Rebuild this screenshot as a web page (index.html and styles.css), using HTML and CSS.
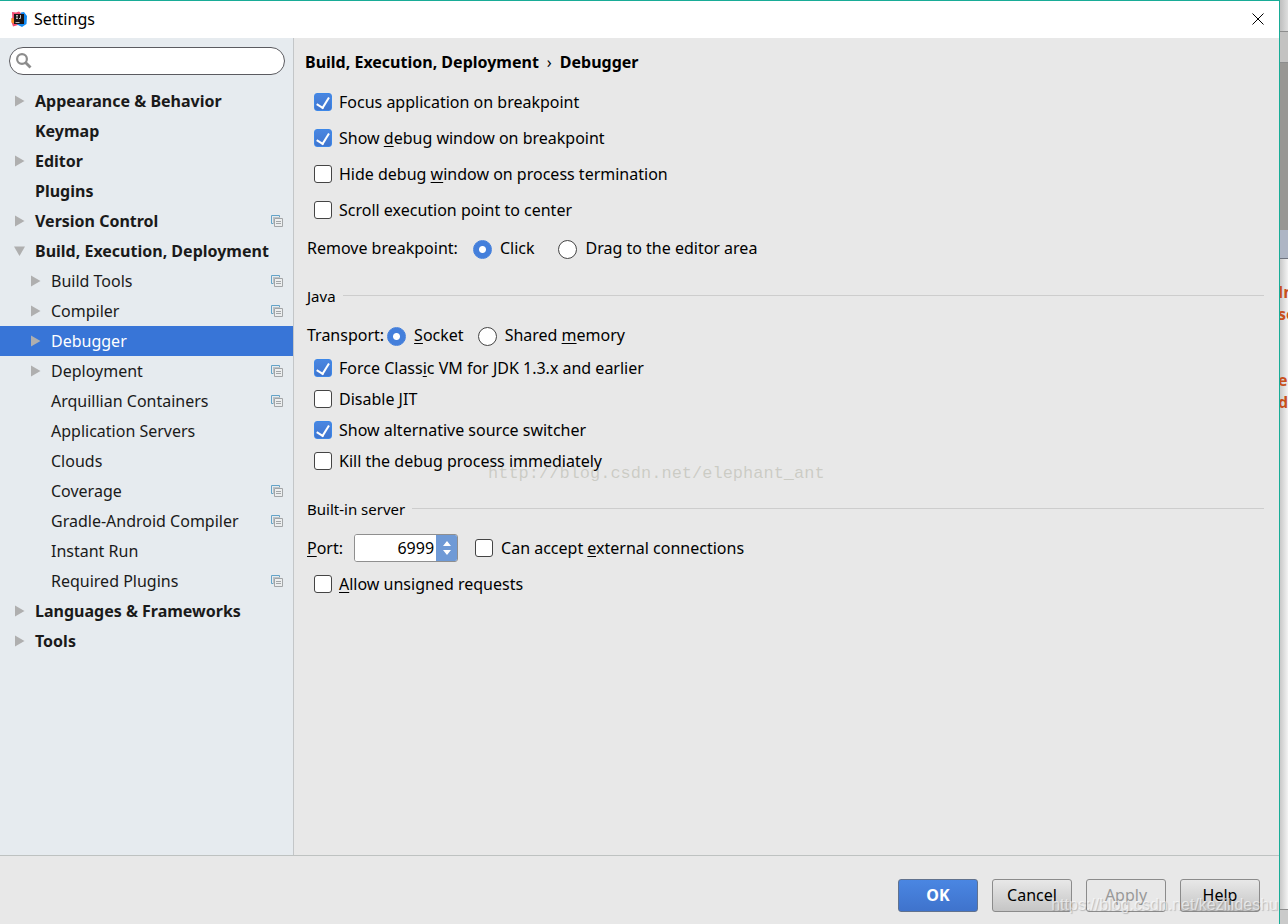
FILE: index.html
```html
<!DOCTYPE html>
<html lang="en">
<head>
<meta charset="utf-8">
<title>Settings</title>
<link rel="stylesheet" href="styles.css">
</head>
<body>
<svg class="defs" aria-hidden="true">
  <symbol id="arrow" viewBox="0 0 12 12"><path d="M1 .5v11l9.500-5.500z" fill="#afafaf"/></symbol>
  <symbol id="arrow-down" viewBox="0 0 12 12"><path d="M0 1.500h11L5.500 11z" fill="#afafaf"/></symbol>
  <symbol id="copy" viewBox="0 0 12 12"><path d="M8.500 2.500v-2h-8v8h2" fill="none" stroke="#64a3c7"/><path d="M2 2h7v1H3v6H2z" fill="#b9c3c9"/><path d="M3.500 3.500h8v8h-8z" fill="#eceeef" stroke="#a2a5a7"/><path d="M5 6.500h5M5 8.500h5" stroke="#a2a5a7"/></symbol>
</svg>
<div class="screen">
  <main class="window">
    <header class="titlebar">
      <svg class="logo" viewBox="0 0 16 16"><path d="M1 1l4 .5 3-1 3 2.500-4 11-5 1.500L.500 11l.8-5z" fill="#f34c72"/><path d="M.3 7l4 1v5L.5 11.500z" fill="#fc8c25"/><path d="M10 1.500L13 1l3 4-.5 8-4.500 3-5-2.500z" fill="#148bf3"/><path d="M3 3h10v10H3z" fill="#1a1517"/><path d="M5 4.500h2M6 4.500v3M5 7.500h2M9.500 4v3.500H8M4.500 11.500h4" stroke="#bbb" fill="none"/></svg>
      <h1 class="title">Settings</h1>
      <button class="close" aria-label="Close"><svg viewBox="0 0 12 12"><path d="M.5.5l11 11M11.500.5l-11 11" stroke="#000"/></svg></button>
    </header>
    <div class="body">
      <aside class="sidebar">
        <label class="search"><svg viewBox="0 0 16 16"><circle cx="6" cy="6" r="4.900" fill="none" stroke="#8c8c8c" stroke-width="2.200"/><path d="M9.500 9.500L14.500 14.500" stroke="#8c8c8c" stroke-width="2.800"/></svg><input type="text" aria-label="Search settings"></label>
        <ul class="tree">
          <li class="top"><svg class="ar"><use href="#arrow"/></svg><span>Appearance &amp; Behavior</span></li>
          <li class="top"><i class="ar"></i><span>Keymap</span></li>
          <li class="top"><svg class="ar"><use href="#arrow"/></svg><span>Editor</span></li>
          <li class="top"><i class="ar"></i><span>Plugins</span></li>
          <li class="top"><svg class="ar"><use href="#arrow"/></svg><span>Version Control</span><svg class="copy"><use href="#copy"/></svg></li>
          <li class="top"><svg class="ar"><use href="#arrow-down"/></svg><span>Build, Execution, Deployment</span></li>
          <li class="sub"><svg class="ar"><use href="#arrow"/></svg><span>Build Tools</span><svg class="copy"><use href="#copy"/></svg></li>
          <li class="sub"><svg class="ar"><use href="#arrow"/></svg><span>Compiler</span><svg class="copy"><use href="#copy"/></svg></li>
          <li class="sub selected"><svg class="ar"><use href="#arrow"/></svg><span>Debugger</span></li>
          <li class="sub"><svg class="ar"><use href="#arrow"/></svg><span>Deployment</span><svg class="copy"><use href="#copy"/></svg></li>
          <li class="sub"><i class="ar"></i><span>Arquillian Containers</span><svg class="copy"><use href="#copy"/></svg></li>
          <li class="sub"><i class="ar"></i><span>Application Servers</span></li>
          <li class="sub"><i class="ar"></i><span>Clouds</span></li>
          <li class="sub"><i class="ar"></i><span>Coverage</span><svg class="copy"><use href="#copy"/></svg></li>
          <li class="sub"><i class="ar"></i><span>Gradle-Android Compiler</span><svg class="copy"><use href="#copy"/></svg></li>
          <li class="sub"><i class="ar"></i><span>Instant Run</span></li>
          <li class="sub"><i class="ar"></i><span>Required Plugins</span><svg class="copy"><use href="#copy"/></svg></li>
          <li class="top"><svg class="ar"><use href="#arrow"/></svg><span>Languages &amp; Frameworks</span></li>
          <li class="top"><svg class="ar"><use href="#arrow"/></svg><span>Tools</span></li>
        </ul>
      </aside>
      <section class="content">
        <h2 class="crumbs"><span>Build, Execution, Deployment</span><span class="sep">›</span><span>Debugger</span></h2>
        <div class="checks loose">
          <label><input type="checkbox" checked><span>Focus application on breakpoint</span></label>
          <label><input type="checkbox" checked><span>Show <u>d</u>ebug window on breakpoint</span></label>
          <label><input type="checkbox"><span>Hide debug <u>w</u>indow on process termination</span></label>
          <label><input type="checkbox"><span>Scroll execution point to center</span></label>
        </div>
        <div class="row remove">
          <span class="lead">Remove breakpoint:</span>
          <label><input type="radio" name="remove" checked><span>Click</span></label>
          <label><input type="radio" name="remove"><span>Drag to the editor area</span></label>
        </div>
        <h3 class="group">Java</h3>
        <div class="row transport">
          <span class="lead">Transport:</span>
          <label><input type="radio" name="transport" checked><span><u>S</u>ocket</span></label>
          <label><input type="radio" name="transport"><span>Shared <u>m</u>emory</span></label>
        </div>
        <div class="checks tight">
          <label><input type="checkbox" checked><span>Force Class<u>i</u>c VM for JDK 1.3.x and earlier</span></label>
          <label><input type="checkbox"><span>Disable JIT</span></label>
          <label><input type="checkbox" checked><span>Show alternative source switcher</span></label>
          <label><input type="checkbox"><span>Kill the debug process immediately</span></label>
          <span class="mark">http://blog.csdn.net/elephant_ant</span>
        </div>
        <h3 class="group">Built-in server</h3>
        <div class="row port">
          <label for="port"><span><u>P</u>ort:</span></label>
          <div class="spinner"><input id="port" type="text" value="6999"><button aria-label="Change port"><svg viewBox="0 0 8 14"><path d="M0 5h8L4 0zM0 9h8l-4 5z" fill="#fff"/></svg></button></div>
          <label><input type="checkbox"><span>Can accept <u>e</u>xternal connections</span></label>
        </div>
        <div class="checks last"><label><input type="checkbox"><span><u>A</u>llow unsigned requests</span></label></div>
      </section>
    </div>
    <footer class="footer">
      <button class="btn primary">OK</button>
      <button class="btn">Cancel</button>
      <button class="btn" disabled>Apply</button>
      <button class="btn">Help</button>
      <span class="credit">https://blog.csdn.net/kezilideshu</span>
    </footer>
  </main>
  <aside class="behind">
    <div class="b1"></div><div class="b2"></div><div class="b3"></div><div class="b4"></div>
    <div class="code"><p>In</p><p>se</p><p class="gap">ea</p><p>d</p></div>
    <div class="b5"></div>
  </aside>
</div>
</body>
</html>
```
FILE: styles.css
```css
* { box-sizing: border-box; }
body { margin: 0; font: 16px/22px "Noto Sans", "Open Sans", sans-serif; color: #000; }
h1, h2, h3, ul, p { margin: 0; padding: 0; }
button, input { font: inherit; color: inherit; }
.defs { position: absolute; width: 0; height: 0; }
.screen { display: flex; min-height: 100vh; overflow: hidden; background: #f3f3f3; }
.window { flex: 1; min-width: 0; display: flex; flex-direction: column; border-top: 1px solid #18ac97; border-right: 1px solid #18ac97; background: #e8e8e8; }
.titlebar { display: flex; align-items: center; height: 37px; padding: 0 15px 1px 11px; background: #fff; }
.logo { width: 16px; height: 16px; margin-right: 7px; }
.title { flex: 1; font-size: 16px; font-weight: 400; line-height: 22px; }
.close { display: flex; padding: 0; border: 0; background: none; }
.close svg { width: 12px; height: 12px; }
.body { flex: 1; display: flex; }
.sidebar { width: 294px; background: #e6ebef; border-right: 1px solid #c3c6c8; }
.search { display: flex; align-items: center; height: 28px; margin: 9px 8px 11px 9px; padding: 0 6px; border: 1px solid #5b5b60; border-radius: 14px; background: #fff; }
.search svg { width: 16px; height: 16px; }
.search input { flex: 1; min-width: 0; border: 0; outline: 0; background: none; }
.tree { list-style: none; color: #1a1a1a; }
.tree li { display: flex; align-items: center; height: 30px; padding: 0 10px 1px 14px; white-space: nowrap; }
.tree .sub { padding-left: 30px; }
.top { font-weight: 700; }
.tree span { flex: 1; }
.ar { width: 12px; height: 12px; margin-right: 9px; }
.copy { width: 12px; height: 12px; }
.tree .selected { background: #3875d7; color: #fff; }
.content { flex: 1; min-width: 0; padding: 13px 15px 0 13px; }
.crumbs { display: flex; gap: 8px; margin-left: -2px; font-size: 16px; font-weight: 700; line-height: 22px; }
.sep { font-weight: 400; }
.content label { display: flex; align-items: center; gap: 7px; white-space: nowrap; }
u { text-underline-offset: 2px; text-decoration-thickness: 1px; }
.checks { display: flex; flex-direction: column; align-items: flex-start; padding-left: 7px; }
.loose { gap: 14px; margin-top: 18px; }
.tight { position: relative; gap: 9px; margin-top: 11px; }
input[type="checkbox"], input[type="radio"] { appearance: none; flex: none; margin: 0; border: 1px solid #444; background: #fff; }
input[type="checkbox"] { width: 18px; height: 18px; border-radius: 3px; }
input[type="radio"] { width: 19px; height: 19px; margin-top: 2px; border-radius: 50%; }
input[type="checkbox"]:checked { display: flex; align-items: flex-start; justify-content: center; border-color: #3c87e8; background: linear-gradient(#4a86e0, #3f75cf); }
input[type="checkbox"]:checked::after { content: ""; width: 6px; height: 11px; margin-top: 1px; border: solid #fff; border-width: 0 2px 2px 0; transform: rotate(32deg); }
input[type="radio"]:checked { border-color: #4480dc; background: radial-gradient(circle, #fff 0 3px, #447fdb 4px); }
.row { display: flex; align-items: center; white-space: nowrap; }
.remove { gap: 24px; margin-top: 16px; }
.remove .lead { margin-right: -9px; }
.row label { gap: 8px; }
.transport { gap: 14px; margin-top: 18px; }
.transport .lead { margin-right: -11px; }
.group { display: flex; align-items: center; gap: 7px; margin-top: 27px; font-size: 15px; font-weight: 400; line-height: 20px; }
.group::after { content: ""; flex: 1; height: 1px; margin-bottom: 2px; background: #cdcdcd; }
.mark { position: absolute; left: 181px; top: 106px; font: 17px/22px "Liberation Mono", monospace; color: rgba(150, 150, 130, .35); white-space: nowrap; }
.port { margin-top: 15px; }
.spinner { display: flex; width: 104px; height: 28px; margin: 0 17px 0 11px; border: 1px solid #8f8f8f; border-radius: 3px; background: #fff; overflow: hidden; }
.spinner input { flex: 1; min-width: 0; padding: 0 2px; border: 0; text-align: right; outline: 0; }
.spinner button { display: flex; align-items: center; justify-content: center; width: 21px; padding: 0; border: 0; background: #6f9ad6; }
.spinner svg { width: 8px; height: 14px; }
.last { margin-top: 11px; }
.footer { position: relative; display: flex; justify-content: flex-end; align-items: center; gap: 14px; height: 69px; padding: 11px 19px 0 0; border-top: 1px solid #bec2c1; }
.btn { width: 80px; height: 33px; padding: 0 0 2px; border: 1px solid #8b8b8b; border-radius: 3px; background: linear-gradient(#e8e8e8, #c5c5c5); }
.btn:disabled { background: #e8e8e8; color: #999; }
.primary { background: linear-gradient(#4a86e2, #3f73cc); border-color: #61728e; color: #fff; font-weight: 700; }
.credit { position: absolute; right: 1px; bottom: 9px; font: 16px/20px "Liberation Sans", sans-serif; color: rgba(255, 255, 255, .6); text-shadow: 1px 1px 1px rgba(0, 0, 0, .2); white-space: nowrap; }
.behind { width: 8px; display: flex; flex-direction: column; background: linear-gradient(90deg, #c9c9c9, #f3f3f3); overflow: hidden; }
.b1 { height: 32px; border-bottom: 1px solid #8d8d8d; background: linear-gradient(90deg, #bfbfbf, #dedede); }
.b2 { height: 31px; border-bottom: 1px solid #8d8d8d; background: #c3c2c1; }
.b3 { height: 167px; background: #999794; }
.b4 { height: 29px; border-bottom: 1px solid #70747f; background: #aeb5c4; }
.code { flex: 1; padding-top: 22px; color: #c8501c; font: 700 16px/22px "Open Sans", sans-serif; }
.code p { margin-left: -2px; }
.code .gap { margin-top: 44px; }
.b5 { height: 15px; border-top: 1px solid #8d8d8d; background: #cacaca; }
```
